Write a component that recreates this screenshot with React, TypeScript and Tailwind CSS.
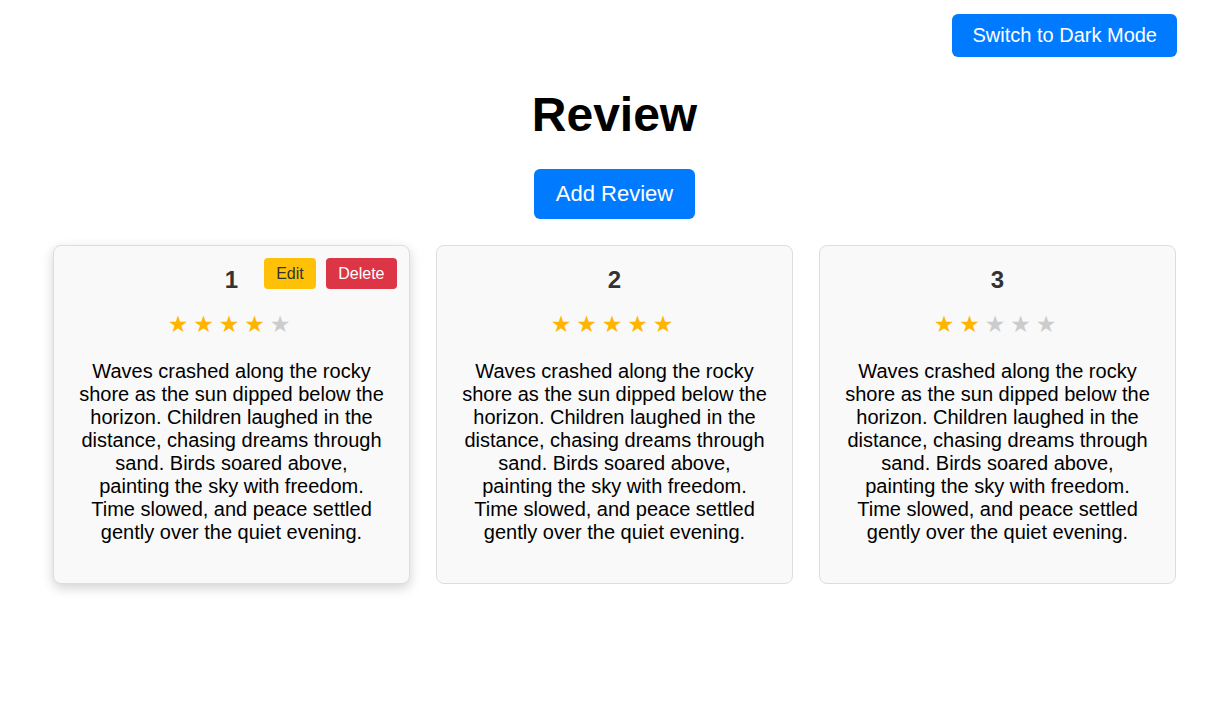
import { useState } from "react";

const text =
  "Waves crashed along the rocky shore as the sun dipped below the horizon. Children laughed in the distance, chasing dreams through sand. Birds soared above, painting the sky with freedom. Time slowed, and peace settled gently over the quiet evening.";

const reviews = [
  { id: 1, rating: 4 },
  { id: 2, rating: 5 },
  { id: 3, rating: 2 },
];

function Stars({ rating }: { rating: number }) {
  return (
    <div className="flex justify-center pr-[5px]">
      {[1, 2, 3, 4, 5].map((n) => (
        <span
          key={n}
          className={
            "inline-block w-[25.5px] text-center text-[23px] leading-[28px] font-['DejaVu_Sans',sans-serif] " +
            (n <= rating ? "text-[#ffb400]" : "text-[#cccccc]")
          }
        >
          ★
        </span>
      ))}
    </div>
  );
}

function ReviewCard({ id, rating, hovered }: { id: number; rating: number; hovered: boolean }) {
  return (
    <div
      className={
        "relative rounded-lg border border-[#dddddd] bg-[#f9f9f9] px-6 pt-5 pb-10 text-center " +
        (hovered ? "shadow-[0_4px_12px_rgba(0,0,0,0.18)]" : "")
      }
    >
      {hovered && (
        <div className="absolute top-[12px] right-[12px] flex gap-[10px]">
          <button className="rounded-[4px] bg-[#ffc107] px-3 py-[6px] text-[16px] leading-[19px] text-[#333333]">
            Edit
          </button>
          <button className="rounded-[4px] bg-[#dc3545] px-[12.5px] py-[6px] text-[16px] leading-[19px] text-white">
            Delete
          </button>
        </div>
      )}
      <h2 className="text-[24px] leading-[28px] font-bold text-[#333333]">{id}</h2>
      <div className="mt-[16px]">
        <Stars rating={rating} />
      </div>
      <p className="mt-[22px] mb-[-1px] text-[20px] leading-[23px] text-black">{text}</p>
    </div>
  );
}

export default function App() {
  const [dark] = useState(false);

  return (
    <div className="min-h-screen bg-white font-['Liberation_Sans',Arial,sans-serif] pl-[53px] pr-[29px]">
      <div className="flex justify-end pt-[14px] mr-[-1px]">
        <button className="rounded-md bg-[#007bff] px-[20px] py-[10px] text-[20px] leading-[23px] text-white">
          {dark ? "Switch to Light Mode" : "Switch to Dark Mode"}
        </button>
      </div>
      <h1 className="mt-[30px] text-center text-[48px] leading-[55px] font-bold text-black">Review</h1>
      <div className="mt-[27px] flex justify-center">
        <button className="rounded-md bg-[#007bff] px-[22px] py-[12px] text-[22px] leading-[26px] text-white">
          Add Review
        </button>
      </div>
      <div className="mt-[26px] grid grid-cols-3 gap-[26px]">
        {reviews.map((r) => (
          <ReviewCard key={r.id} id={r.id} rating={r.rating} hovered={r.id === 1} />
        ))}
      </div>
    </div>
  );
}
